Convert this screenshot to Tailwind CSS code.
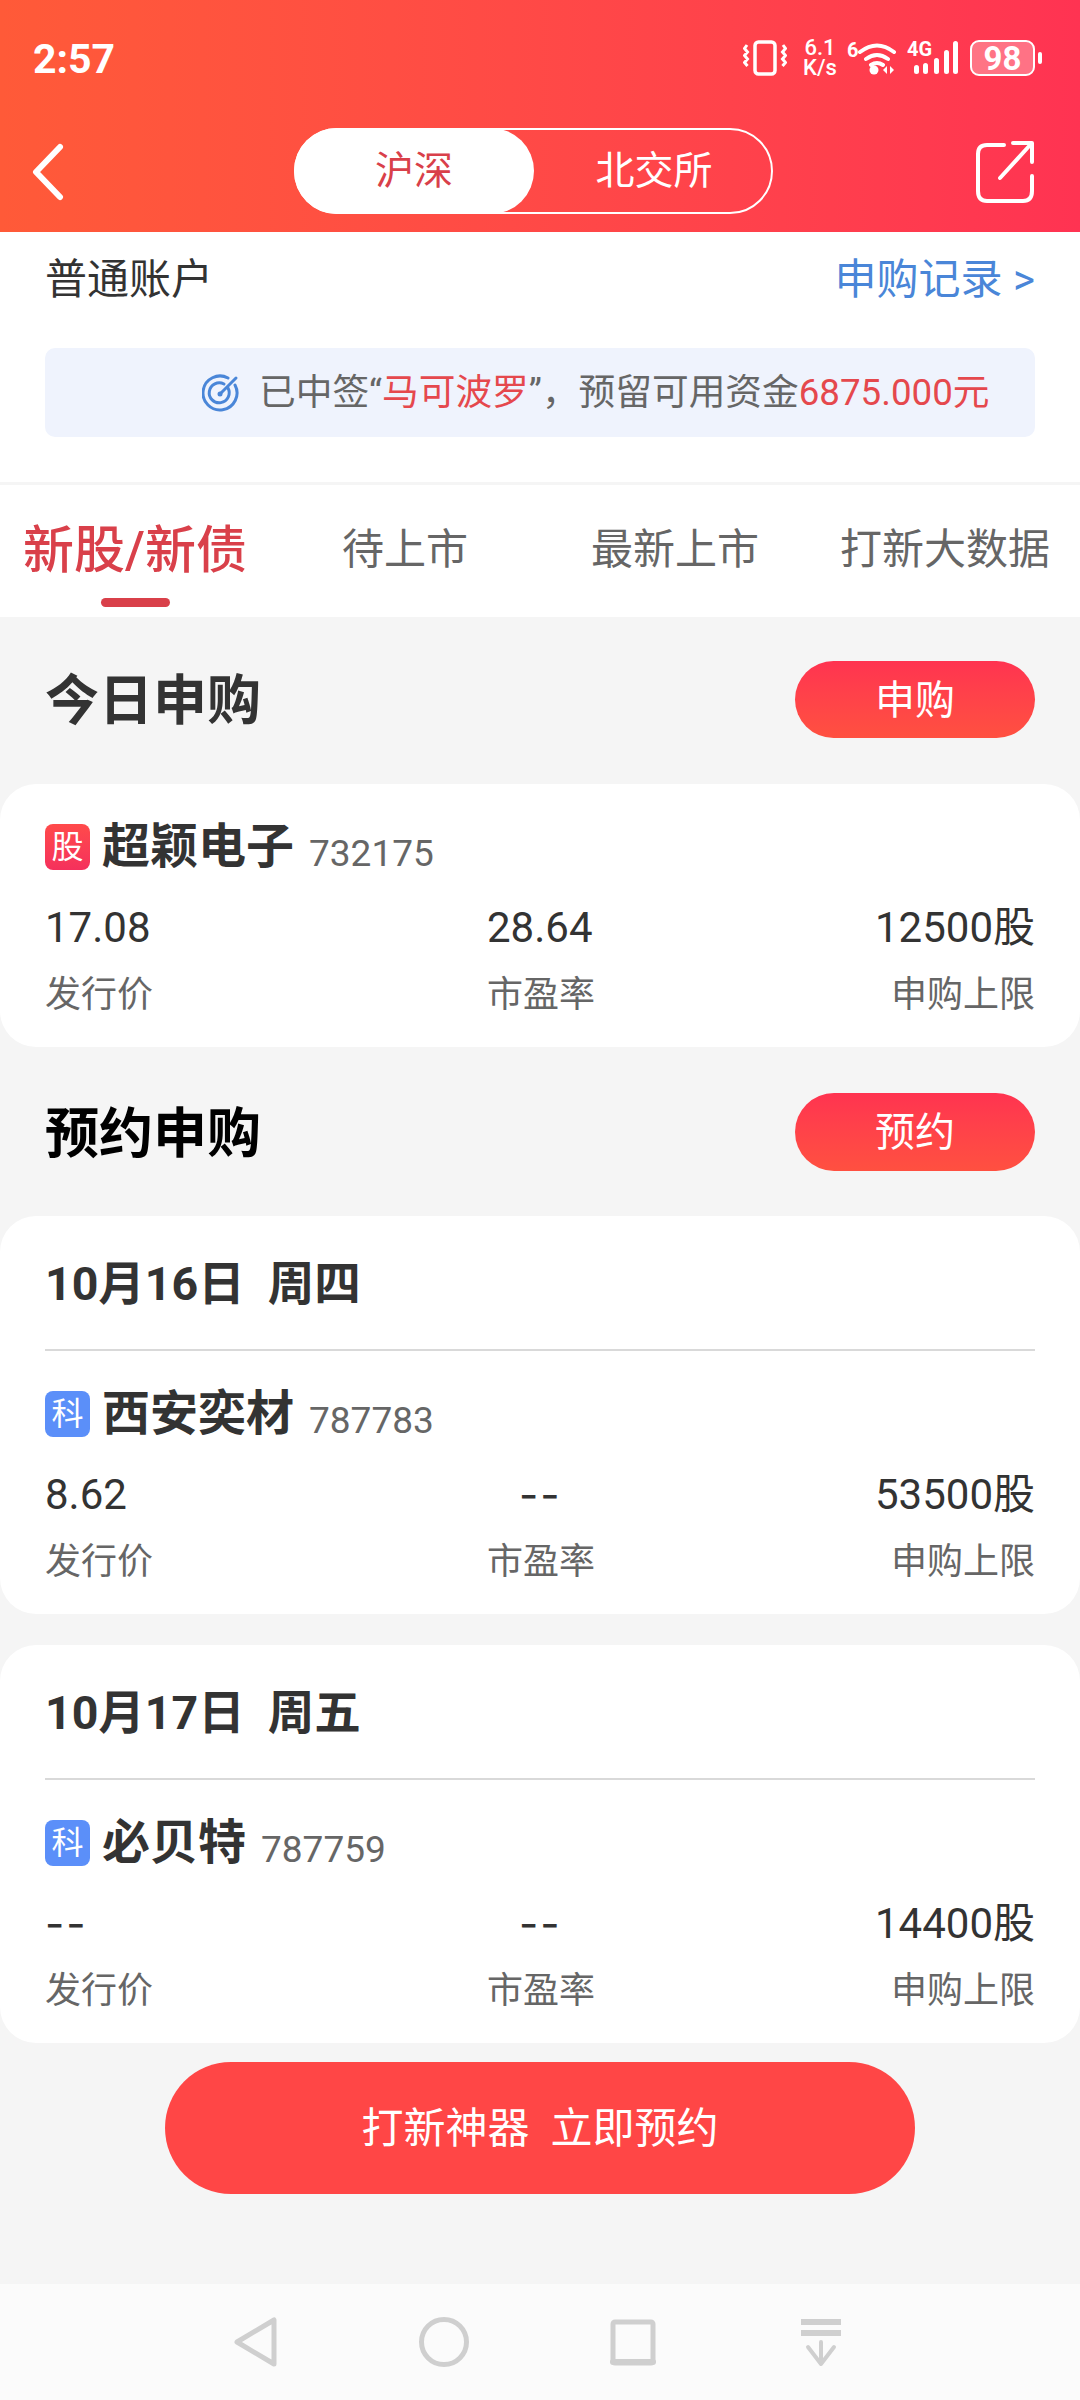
<!DOCTYPE html>
<html lang="zh-CN">
<head>
    <meta charset="UTF-8">
    <meta name="viewport" content="width=device-width, initial-scale=1.0">
    <title>新股申购</title>
    <script src="https://cdn.jsdelivr.net/npm/@tailwindcss/browser@4"></script>
</head>
<body class="bg-[#f5f5f5]">
<div class="w-[1080px] h-[2400px] flex flex-col overflow-hidden text-[#333] font-['Roboto','Noto_Sans_CJK_SC',sans-serif]">

    <!-- header -->
    <header class="h-[232px] shrink-0 bg-linear-to-r from-[#ff5a38] to-[#ff3352] text-white">
        <div class="h-[116px] pl-[33px] pr-[38px] flex items-center justify-between">
            <span class="mt-[2px] text-[41px] font-bold leading-none">2:57</span>
            <div class="flex items-center">
                <svg width="44" height="36" viewBox="0 0 44 36" fill="none" stroke="white" stroke-width="3.500">
                    <rect x="12" y="2" width="20" height="32" rx="3.500"/>
                    <path d="M4 5l-2.500 3.500 3 3.500-3 3.500 3 3.500-3 3.500 3 3.500M40 5l2.500 3.500-3 3.500 3 3.500-3 3.500 3 3.500-3 3.500" stroke-width="3"/>
                </svg>
                <div class="ml-[15px] w-[36px] flex flex-col items-center text-[22px] leading-[20px] font-medium"><span>6.1</span><span>K/s</span></div>
                <div class="ml-[9px] w-[50px] h-[36px] flex items-start">
                    <span class="text-[20px] leading-[20px] font-bold">6</span>
                    <svg class="-ml-[11px] shrink-0" width="50" height="36" viewBox="0 0 50 36" fill="none" stroke="white" stroke-width="4" stroke-linecap="round">
                        <path d="M13 12q17-13 34 0M19 19q11-8 22 0M24 25q6-4 12 0"/>
                        <circle cx="27" cy="30" r="4.500" fill="white" stroke="none"/>
                        <path d="M40 26l-4 4 4 4zM43 26l4 4-4 4z" fill="white" stroke="none"/>
                    </svg>
                </div>
                <div class="ml-[10px] w-[52px] h-[36px] flex items-start">
                    <span class="text-[20px] leading-[18px] font-bold">4G</span>
                    <svg class="-ml-[24px] shrink-0" width="52" height="36" viewBox="0 0 52 36" fill="white">
                        <rect x="6" y="25" width="5" height="9" rx="2.500"/>
                        <rect x="15" y="23" width="5" height="11" rx="2.500"/>
                        <rect x="26" y="18" width="5" height="16" rx="2.500"/>
                        <rect x="36" y="10" width="5" height="24" rx="2.500"/>
                        <rect x="45" y="1" width="5" height="33" rx="2.500"/>
                    </svg>
                </div>
                <div class="ml-[11px] w-[65px] h-[36px] rounded-[9px] border-2 border-white bg-white/30 flex items-center justify-center text-[33px] font-bold leading-none">98</div>
                <div class="ml-[3px] w-[4px] h-[12px] rounded-full bg-white"></div>
            </div>
        </div>
        <div class="h-[116px] pl-[31px] pr-[45px] flex items-start justify-between relative">
            <svg class="mt-[27px]" width="34" height="58" viewBox="0 0 34 58" fill="none" stroke="white" stroke-width="6" stroke-linecap="round" stroke-linejoin="round">
                <path d="M29 4L5 29l24 25"/>
            </svg>
            <div class="absolute left-[294px] top-[12px] w-[479px] h-[86px] rounded-full border-2 border-white flex items-center text-[39px]">
                <div class="w-[240px] h-[86px] -ml-[2px] rounded-full bg-white text-[#d9404a] flex items-center justify-center">沪深</div>
                <div class="flex-1 pl-[3px] flex items-center justify-center">北交所</div>
            </div>
            <svg class="mt-[24px]" width="60" height="64" viewBox="0 0 60 64" fill="none" stroke="white" stroke-width="4" stroke-linecap="round" stroke-linejoin="round">
                <path d="M29 5H12Q3 5 3 14v37q0 10 9 10h36q9 0 9-10V36"/>
                <path d="M25 38L56 4M38 3h19v19"/>
            </svg>
        </div>
    </header>

    <!-- account -->
    <section class="bg-white h-[253px] shrink-0 px-[45px] border-b-[3px] border-[#f5f5f5]">
        <div class="h-[92px] pt-[2px] flex items-center justify-between text-[42px]">
            <span>普通账户</span>
            <span class="text-[#4a86d8]">申购记录 &gt;</span>
        </div>
        <div class="mt-[24px] h-[89px] rounded-[10px] bg-[#eff3fd] pl-[157px] flex items-center text-[36.700px] text-[#666]">
            <svg class="mr-[19px] shrink-0" width="38" height="38" viewBox="0 0 38 38" fill="none" stroke="#4a86d8" stroke-width="3" stroke-linecap="round">
                <path d="M33 11a17 17 0 1 1-7-7"/>
                <path d="M26 14a10 10 0 1 1-4-4"/>
                <path d="M18 20L34 4"/>
                <circle cx="18" cy="20" r="2.500" fill="#4a86d8" stroke="none"/>
            </svg>
            <span class="whitespace-nowrap">已中签“<span class="text-[#e5484d]">马可波罗</span>”，预留可用资金<span class="text-[#e5484d]">6875.000元</span></span>
        </div>
    </section>

    <!-- tabs -->
    <nav class="bg-white h-[132px] shrink-0 grid grid-cols-4 text-[42px] text-[#666]">
        <div class="flex flex-col items-center">
            <span class="mt-[31px] h-[70px] leading-[70px] text-[51px] font-medium text-[#d9404a] whitespace-nowrap">新股/新债</span>
            <span class="mt-[12px] w-[69px] h-[9px] rounded-full bg-[#d9404a]"></span>
        </div>
        <div class="flex justify-center pt-[35px] leading-[60px]">待上市</div>
        <div class="flex justify-center pt-[35px] leading-[60px]">最新上市</div>
        <div class="flex justify-center pt-[35px] leading-[60px] whitespace-nowrap">打新大数据</div>
    </nav>

    <!-- today -->
    <div class="mt-[44px] h-[77px] shrink-0 px-[45px] flex items-center justify-between">
        <h2 class="mt-[4px] text-[54px] font-bold">今日申购</h2>
        <button class="w-[240px] h-[77px] pt-[2px] rounded-full bg-linear-to-b from-[#ff3350] to-[#ff5040] text-white text-[40px]">申购</button>
    </div>
    <div class="mt-[46px] h-[263px] shrink-0 bg-white rounded-[36px] px-[45px] pt-[40px]">
        <div class="h-[46px] flex items-center">
            <span class="w-[45px] h-[46px] rounded-[8px] bg-linear-to-b from-[#ff4a4a] to-[#f5305c] text-white text-[32px] flex items-center justify-center">股</span>
            <span class="ml-[12px] text-[48px] font-bold">超颖电子</span>
            <span class="ml-[15px] mt-[13px] text-[37px] text-[#666]">732175</span>
        </div>
        <div class="mt-[27px] h-[60px] flex items-center text-[42px]">
            <span class="w-[442px]">17.08</span>
            <span class="flex-1">28.64</span>
            <span>12500股</span>
        </div>
        <div class="mt-[13px] h-[50px] flex items-center text-[36px] text-[#666]">
            <span class="w-[442px]">发行价</span>
            <span class="flex-1">市盈率</span>
            <span>申购上限</span>
        </div>
    </div>

    <!-- reservations -->
    <div class="mt-[46px] h-[78px] shrink-0 px-[45px] flex items-center justify-between">
        <h2 class="mt-[4px] text-[54px] font-bold text-black">预约申购</h2>
        <button class="w-[240px] h-[78px] pt-[2px] rounded-full bg-linear-to-b from-[#ff3350] to-[#ff5040] text-white text-[40px]">预约</button>
    </div>
    <div class="mt-[45px] h-[398px] shrink-0 bg-white rounded-[36px] px-[45px] pt-[39px]">
        <div class="h-[60px] flex items-center text-[46.500px] font-bold whitespace-pre">10月16日  周四</div>
        <div class="mt-[34px] h-[2px] bg-[#d9d9d9]"></div>
        <div class="mt-[40px] h-[46px] flex items-center">
            <span class="w-[45px] h-[46px] rounded-[8px] bg-[#5b8ff9] text-white text-[32px] flex items-center justify-center">科</span>
            <span class="ml-[12px] text-[48px] font-bold">西安奕材</span>
            <span class="ml-[15px] mt-[13px] text-[37px] text-[#666]">787783</span>
        </div>
        <div class="mt-[27px] h-[60px] flex items-center text-[42px]">
            <span class="w-[442px]">8.62</span>
            <span class="flex-1 pl-[32px] font-['Inter'] tracking-[2px]">--</span>
            <span>53500股</span>
        </div>
        <div class="mt-[13px] h-[50px] flex items-center text-[36px] text-[#666]">
            <span class="w-[442px]">发行价</span>
            <span class="flex-1">市盈率</span>
            <span>申购上限</span>
        </div>
    </div>
    <div class="mt-[31px] h-[398px] shrink-0 bg-white rounded-[36px] px-[45px] pt-[39px]">
        <div class="h-[60px] flex items-center text-[46.500px] font-bold whitespace-pre">10月17日  周五</div>
        <div class="mt-[34px] h-[2px] bg-[#d9d9d9]"></div>
        <div class="mt-[40px] h-[46px] flex items-center">
            <span class="w-[45px] h-[46px] rounded-[8px] bg-[#5b8ff9] text-white text-[32px] flex items-center justify-center">科</span>
            <span class="ml-[12px] text-[48px] font-bold">必贝特</span>
            <span class="ml-[15px] mt-[13px] text-[37px] text-[#666]">787759</span>
        </div>
        <div class="mt-[27px] h-[60px] flex items-center text-[42px]">
            <span class="w-[442px] font-['Inter'] tracking-[2px]">--</span>
            <span class="flex-1 pl-[32px] font-['Inter'] tracking-[2px]">--</span>
            <span>14400股</span>
        </div>
        <div class="mt-[13px] h-[50px] flex items-center text-[36px] text-[#666]">
            <span class="w-[442px]">发行价</span>
            <span class="flex-1">市盈率</span>
            <span>申购上限</span>
        </div>
    </div>

    <button class="mt-[19px] mx-auto w-[750px] h-[132px] shrink-0 rounded-full bg-[#ff4646] text-white text-[42px] whitespace-pre">打新神器  立即预约</button>

    <div class="flex-1"></div>

    <!-- android nav bar -->
    <div class="h-[116px] shrink-0 bg-[#fbfbfb] relative">
        <svg class="absolute left-0 top-0" width="1080" height="116" viewBox="0 0 1080 116" fill="none" stroke="#cfcfcf" stroke-width="5" stroke-linejoin="round" stroke-linecap="round">
            <path d="M274 36v44L237 58z"/>
            <circle cx="444" cy="58" r="22.500"/>
            <rect x="613" y="38" width="40" height="41" rx="2"/>
            <path d="M613 78h40" stroke-width="6"/>
            <path d="M801 38h40M801 49h40" stroke-width="6" stroke-linecap="butt"/>
            <path d="M821 58v22M808 63l13 17 13-17" stroke-width="4"/>
        </svg>
    </div>
</div>
</body>
</html>
